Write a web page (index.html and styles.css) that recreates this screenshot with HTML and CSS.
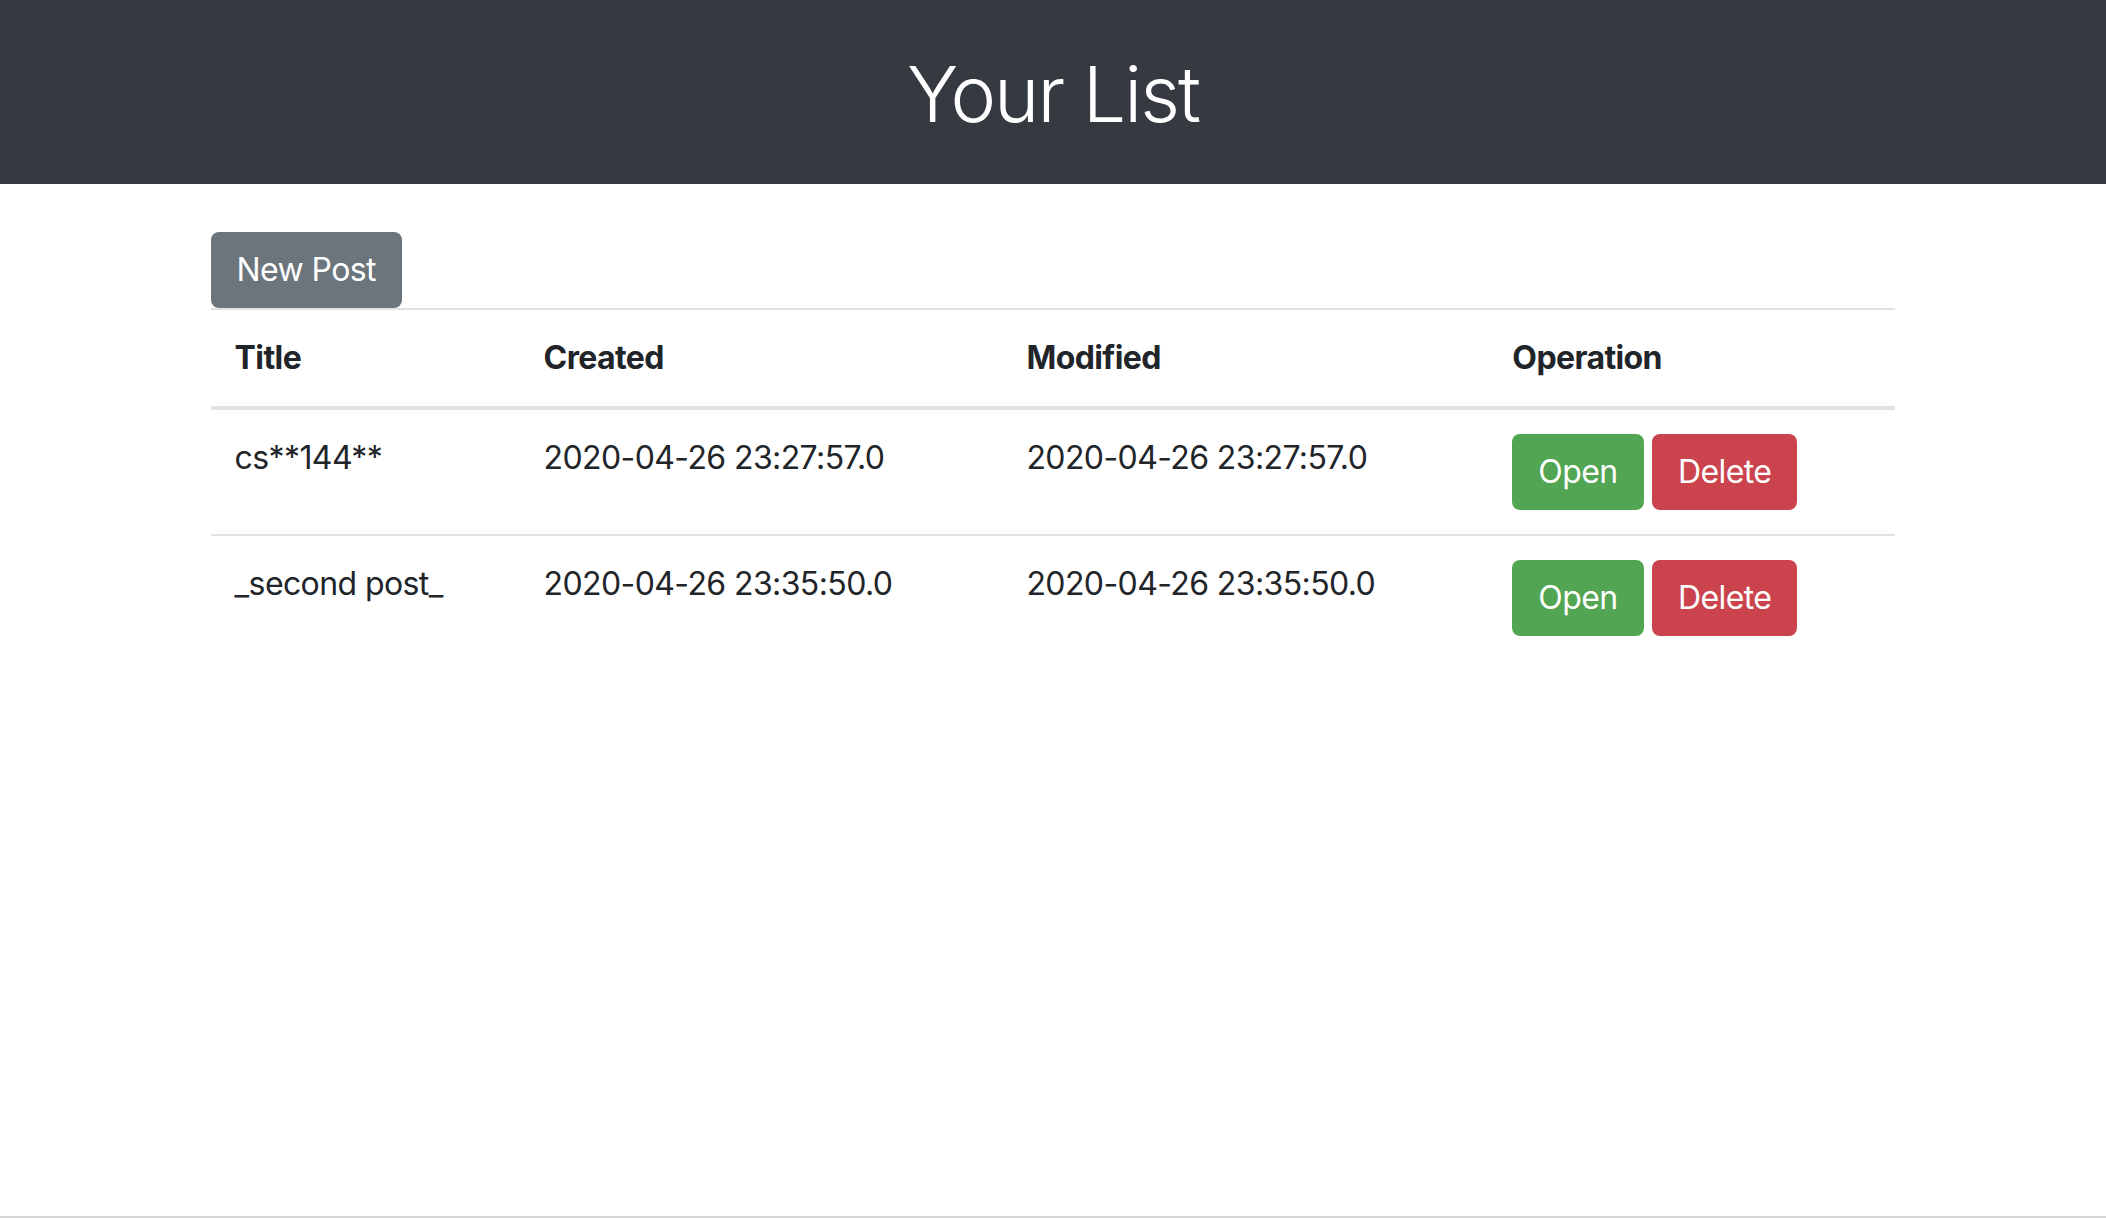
FILE: index.html
```html
<!DOCTYPE html>
<html lang="en">
<head>
<meta charset="utf-8">
<title>Your List</title>
<link rel="stylesheet" href="styles.css">
</head>
<body>
<header class="page-header">
  <h1 class="page-title">Your List</h1>
</header>
<main class="content">
  <div class="toolbar">
    <a class="btn btn-secondary" href="#">New Post</a>
  </div>
  <table class="post-table">
    <colgroup>
      <col class="col-title">
      <col class="col-created">
      <col class="col-modified">
      <col class="col-op">
    </colgroup>
    <thead>
      <tr>
        <th>Title</th>
        <th>Created</th>
        <th>Modified</th>
        <th>Operation</th>
      </tr>
    </thead>
    <tbody>
      <tr>
        <td>cs**144**</td>
        <td>2020-04-26 23:27:57.0</td>
        <td>2020-04-26 23:27:57.0</td>
        <td><a class="btn btn-success" href="#">Open</a> <a class="btn btn-danger" href="#">Delete</a></td>
      </tr>
      <tr>
        <td>_second post_</td>
        <td>2020-04-26 23:35:50.0</td>
        <td>2020-04-26 23:35:50.0</td>
        <td><a class="btn btn-success" href="#">Open</a> <a class="btn btn-danger" href="#">Delete</a></td>
      </tr>
    </tbody>
  </table>
</main>
<div class="page-foot"></div>
</body>
</html>
```
FILE: styles.css
```css
html, body {
  margin: 0;
  padding: 0;
}

body {
  min-height: 100vh;
  display: flex;
  flex-direction: column;
  font-family: Inter, "Liberation Sans", sans-serif;
  font-size: 32px;
  line-height: 48px;
  letter-spacing: -0.6px;
  color: #212529;
  background: #fff;
}

.page-header {
  height: 184px;
  box-sizing: border-box;
  padding-top: 5px;
  background: #353a41;
  display: flex;
  align-items: center;
  justify-content: center;
}

.page-title {
  margin: 0;
  font-size: 77px;
  line-height: 1.2;
  font-weight: 300;
  letter-spacing: -2px;
  color: #fff;
}

.content {
  flex: 1;
  width: 80%;
  margin: 48px auto 0;
}

.toolbar {
  display: flex;
}

.btn {
  display: inline-block;
  padding: 12px 24px;
  border: 2px solid transparent;
  border-radius: 8px;
  font-size: 32px;
  line-height: 48px;
  color: #fff;
  text-decoration: none;
  vertical-align: top;
}

.btn-secondary {
  background: #6c747c;
}

.btn-success {
  background: #52a552;
}

.btn-danger {
  background: #cb444d;
}

.post-table {
  width: 100%;
  border-collapse: collapse;
  table-layout: fixed;
}

.col-title { width: 18.34%; }
.col-created { width: 28.66%; }
.col-modified { width: 28.84%; }
.col-op { width: 24.16%; }

.post-table th,
.post-table td {
  padding: 24px;
  text-align: left;
  vertical-align: top;
  border-top: 2px solid #dee2e6;
  white-space: nowrap;
}

.post-table th {
  font-weight: 700;
}

.post-table thead th {
  border-bottom: 4px solid #dee2e6;
}

.page-foot {
  height: 2px;
  background: #d6d6d6;
}
```
